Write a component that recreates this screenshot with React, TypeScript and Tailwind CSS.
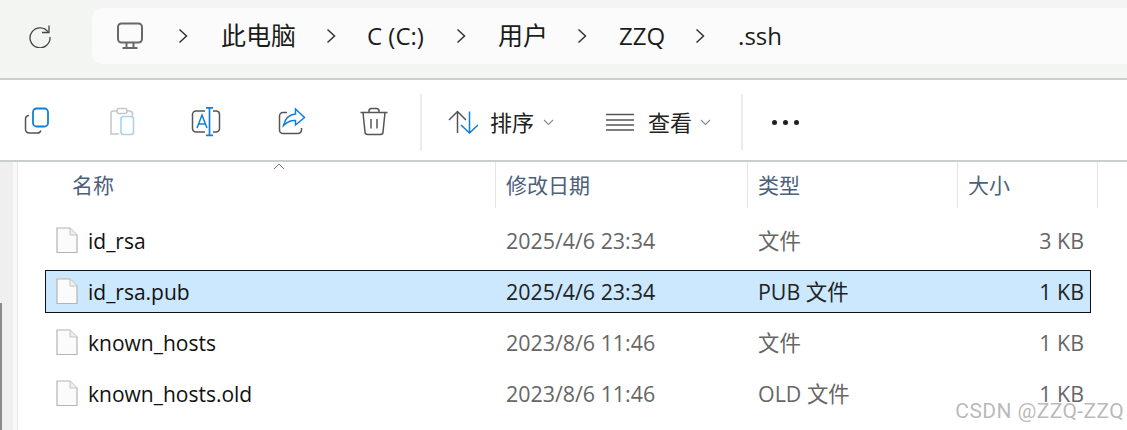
import type { ReactNode } from "react";

const cjk = "font-['Open_Sans','Noto_Sans_CJK_SC',sans-serif]";

const files = [
    { name: "id_rsa", date: "2025/4/6 23:34", type: "文件", size: "3 KB" },
    { name: "id_rsa.pub", date: "2025/4/6 23:34", type: "PUB 文件", size: "1 KB", selected: true },
    { name: "known_hosts", date: "2023/8/6 11:46", type: "文件", size: "1 KB" },
    { name: "known_hosts.old", date: "2023/8/6 11:46", type: "OLD 文件", size: "1 KB" },
];

const Chevron = () => (
    <svg width="10" height="16" viewBox="0 0 10 16" fill="none" stroke="#333" strokeWidth="1.5" className="shrink-0">
        <path d="M1.5 1.5 8.5 8l-7 6.5" />
    </svg>
);

const SmallCaret = () => (
    <svg width="11" height="7" viewBox="0 0 11 7" fill="none" stroke="#8a8a8a" strokeWidth="1.1">
        <path d="M1 1l4.500 4.500L10 1" />
    </svg>
);

const Crumb = ({ children, className }: { children: ReactNode; className: string }) => (
    <span className={`leading-none text-[#1b1b1b] ${className}`}>{children}</span>
);

const ToolIcon = ({ children, className }: { children: ReactNode; className: string }) => (
    <svg width="30" height="30" viewBox="0 0 30 30" fill="none" strokeWidth="1.500" className={`shrink-0 ${className}`}>
        {children}
    </svg>
);

const FileIcon = () => (
    <svg width="22" height="27" viewBox="0 0 22 27" fill="none" className="shrink-0">
        <path d="M1 1h13l7 7v17.500H1z" fill="#fbfbfb" stroke="#b4b4b4" strokeWidth="1.200" />
        <path d="M14 1v7h7" fill="#efefef" stroke="#c4c4c4" strokeWidth="1" />
    </svg>
);

const HeaderCell = ({ label, className }: { label: string; className: string }) => (
    <div className={`flex h-[46px] items-center border-r border-[#e5e5e5] pt-[2px] pl-[10px] text-[21px] text-[#4c607a] ${className}`}>
        {label}
    </div>
);

const App = () => {
    return (
        <div className={`relative flex h-[430px] w-[1127px] flex-col overflow-hidden bg-white ${cjk}`}>
            {/* address bar */}
            <div className="flex h-[80px] shrink-0 items-start border-b-2 border-[#c9cfcc] bg-[#f3f5f2] pt-2">
                <div className="flex h-14 w-[92px] shrink-0 items-center pl-[28px]">
                    <svg width="24" height="24" viewBox="0 0 24 24" fill="none" stroke="#444" strokeWidth="1.300">
                        <path d="M20.500 8.500A10 10 0 1 0 22 13" />
                        <path d="M21 1.500v7h-7" />
                    </svg>
                </div>
                <div className="flex h-14 flex-1 items-center rounded-l-[10px] bg-[#fbfbfb] pb-[1px]">
                    <svg width="28" height="28" viewBox="0 0 28 28" fill="none" stroke="#686868" strokeWidth="2" className="ml-[24px] shrink-0">
                        <rect x="2" y="1.500" width="24" height="19" rx="3.500" />
                        <path d="M10.500 21v4M17.500 21v4M6.500 26h15" />
                    </svg>
                    <div className="ml-[34px]"><Chevron /></div>
                    <Crumb className="ml-[33px] text-[25px]">此电脑</Crumb>
                    <div className="ml-[30px]"><Chevron /></div>
                    <Crumb className="ml-[31px] text-[24px]">C (C:)</Crumb>
                    <div className="ml-[32px]"><Chevron /></div>
                    <Crumb className="ml-[32px] text-[25px]">用户</Crumb>
                    <div className="ml-[29px]"><Chevron /></div>
                    <Crumb className="ml-[32px] text-[24px]">ZZQ</Crumb>
                    <div className="ml-[30px]"><Chevron /></div>
                    <Crumb className="ml-[33px] text-[24px]">.ssh</Crumb>
                </div>
            </div>

            {/* toolbar */}
            <div className="flex h-[82px] shrink-0 items-center border-b-2 border-[#c9cfcc] bg-white pl-[24px] pt-[4px]">
                <ToolIcon className="">
                    <path d="M5 8.500c-2 .3-3.500 1.500-3.500 3.500v10c0 3 1.500 4 4 4h8c2 0 3-1 3.300-2.500" stroke="#555" />
                    <rect x="9" y="1.500" width="15" height="18" rx="3.500" stroke="#0f7fd8" strokeWidth="1.800" />
                </ToolIcon>
                <ToolIcon className="ml-[55px]">
                    <path d="M8 4H4.500A2 2 0 0 0 2 6v21h8" stroke="#c6c6c6" />
                    <path d="M18 4h3a3 3 0 0 1 2.500 3v2" stroke="#c6c6c6" />
                    <rect x="8" y="1.500" width="10" height="5" rx="2" stroke="#c6c6c6" />
                    <rect x="12" y="9.500" width="12.500" height="18" rx="2.500" stroke="#a8d2f2" strokeWidth="1.600" />
                </ToolIcon>
                <ToolIcon className="ml-[52px]">
                    <path d="M14 4H5a3.500 3.500 0 0 0-3.500 3.500v14A3.500 3.500 0 0 0 5 25h9M22 4h3.500A3.500 3.500 0 0 1 28.500 7.500v14a3.500 3.500 0 0 1-3.500 3.500H22" stroke="#555" />
                    <path d="M6 21l5-13 5 13M7.500 17h7" stroke="#0f7fd8" />
                    <path d="M15 .8h7M18.500.8v27.500M15 28.300h7" stroke="#0f7fd8" strokeWidth="1.700" />
                </ToolIcon>
                <ToolIcon className="ml-[56px]">
                    <path d="M10 5.500H6A3.500 3.500 0 0 0 2.500 9v14A3.500 3.500 0 0 0 6 26.500h15a3.500 3.500 0 0 0 3.500-3.500v-2" stroke="#555" />
                    <path d="M18.500 2 27.500 10.500 18.500 18v-4.500C14 13 10 15 6.500 18.500 8 12 12 7.500 18.500 7z" stroke="#0f7fd8" />
                </ToolIcon>
                <ToolIcon className="ml-[52px]">
                    <path d="M1.500 5.500h27M10 5.500V4a2.500 2.500 0 0 1 2.500-2.500h5A2.500 2.500 0 0 1 20 4v1.500M4 5.500 6 25a2.500 2.500 0 0 0 2.500 2.500h13A2.500 2.500 0 0 0 24 25l2-19.500M12 12v9.500M18 12v9.500" stroke="#555" />
                </ToolIcon>
                <div className="ml-[31px] h-14 w-[2px] shrink-0 bg-[#ebebeb]" />
                <svg width="30" height="24" viewBox="0 0 30 24" fill="none" strokeWidth="1.500" className="ml-[26px] shrink-0">
                    <path d="M1 10 9.500 1.500 18 10M9.500 1.500V23" stroke="#555" />
                    <path d="M13 15l8.500 8 8.500-8M21.500 1.500V23" stroke="#0f7fd8" />
                </svg>
                <span className="ml-[12px] text-[22px] leading-none text-[#222]">排序</span>
                <div className="ml-[9px] flex"><SmallCaret /></div>
                <svg width="29" height="18" viewBox="0 0 29 18" fill="none" stroke="#555" strokeWidth="1.500" className="ml-[52px] shrink-0">
                    <path d="M0 1.500h28M0 7h28M0 12h28M0 17h28" />
                </svg>
                <span className="ml-[13px] text-[22px] leading-none text-[#222]">查看</span>
                <div className="ml-[8px] flex"><SmallCaret /></div>
                <div className="ml-[30px] h-14 w-[2px] shrink-0 bg-[#ebebeb]" />
                <div className="ml-[29px] flex gap-[6px]">
                    <span className="size-[5px] rounded-full bg-[#1f1f1f]" />
                    <span className="size-[5px] rounded-full bg-[#1f1f1f]" />
                    <span className="size-[5px] rounded-full bg-[#1f1f1f]" />
                </div>
            </div>

            {/* file list */}
            <div className="flex min-h-0 flex-1">
                <div className="flex w-[13px] shrink-0 flex-col justify-end bg-[#efefef]">
                    <div className="h-[127px] w-[2px] bg-[#8b8b8b]" />
                </div>
                <div className="w-[5px] shrink-0 border-r border-[#e9e9e9] bg-[#f9f9f9]" />
                <div className="relative min-w-0 flex-1">
                    <svg width="12" height="7" viewBox="0 0 12 7" fill="none" stroke="#777" strokeWidth="1" className="absolute left-[255px] top-[1px]">
                        <path d="M1 6l5-5 5 5" />
                    </svg>
                    <div className="flex">
                        <HeaderCell label="名称" className="w-[478px] pl-[54px]" />
                        <HeaderCell label="修改日期" className="w-[252px]" />
                        <HeaderCell label="类型" className="w-[210px]" />
                        <HeaderCell label="大小" className="w-[140px]" />
                    </div>
                    <div className="flex flex-col pl-[27px] pt-[11px]">
                        {files.map((file) => (
                            <div
                                key={file.name}
                                className={`flex h-[43px] w-[1046px] items-center border text-[21.4px] leading-none [&:not(:last-child)]:mb-[8px] ${
                                    file.selected ? "border-[#111] bg-[#cce8ff]" : "border-transparent"
                                }`}
                            >
                                <div className="flex w-[460px] shrink-0 items-center pl-[10px]">
                                    <FileIcon />
                                    <span className="ml-[10px] pt-[2px] text-[21px] text-[#111]">{file.name}</span>
                                </div>
                                <span className={`w-[252px] shrink-0 ${file.selected ? "text-[#222]" : "text-[#666]"}`}>{file.date}</span>
                                <span className={`w-[200px] shrink-0 ${file.selected ? "text-[#222]" : "text-[#666]"}`}>{file.type}</span>
                                <span className={`w-[126px] shrink-0 text-right ${file.selected ? "text-[#222]" : "text-[#666]"}`}>{file.size}</span>
                            </div>
                        ))}
                    </div>
                </div>
            </div>

            {/* watermark */}
            <span className="absolute right-[3px] top-[399px] font-['Roboto',sans-serif] text-[21px] leading-[24px] tracking-[0.4px] text-[#8a8a8a]/60">
                CSDN @ZZQ-ZZQ
            </span>
        </div>
    );
};

export default App;
